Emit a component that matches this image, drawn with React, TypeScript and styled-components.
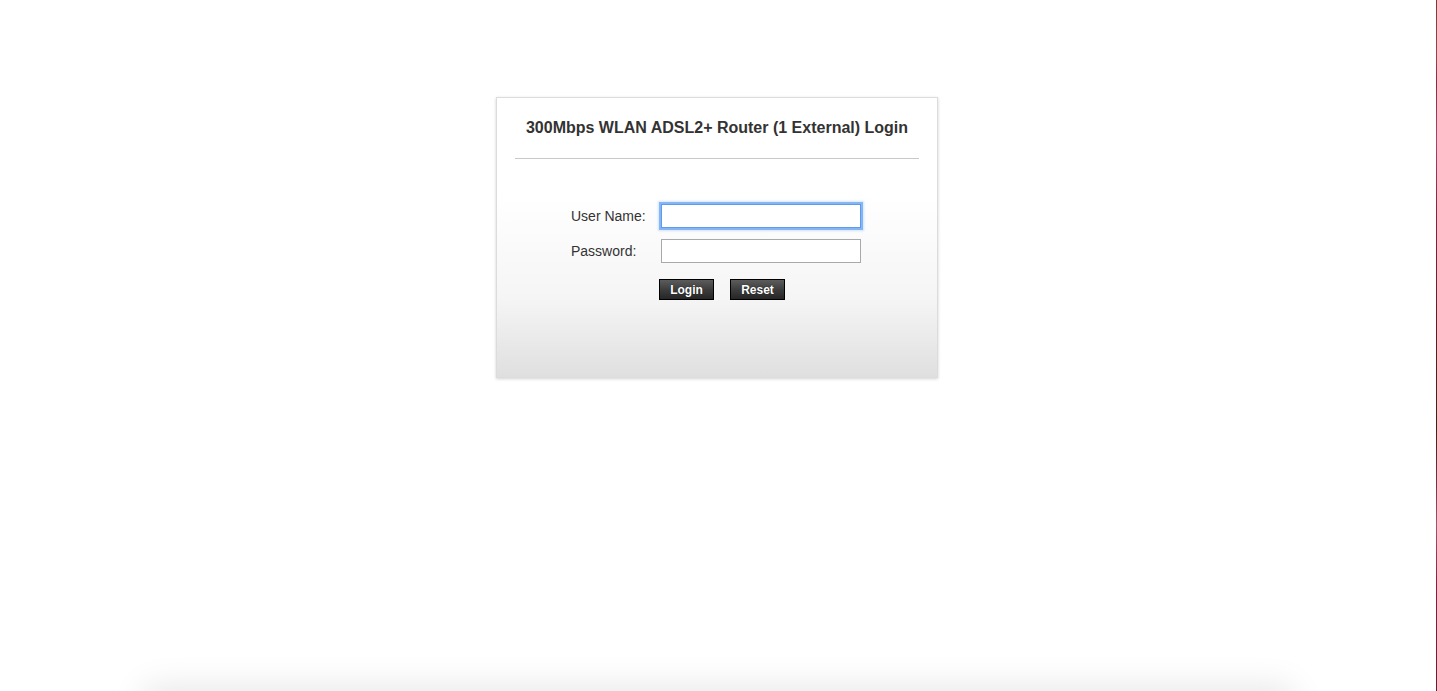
import React from 'react';
import { styled, createGlobalStyle } from 'styled-components';

const GlobalStyle = createGlobalStyle`
  html, body {
    margin: 0;
    padding: 0;
    background: #fff;
    font-family: "Liberation Sans", Arial, sans-serif;
  }
`;

const App: React.FC = () => {
  return (
    <>
      <GlobalStyle />
      <Screen>
        <Page>
          <Content>
            <LoginBox>
              <Title>300Mbps WLAN ADSL2+ Router (1 External) Login</Title>
              <Divider />
              <Form onSubmit={e => e.preventDefault()}>
                <Label htmlFor="username">User Name:</Label>
                <Field id="username" type="text" $focused />
                <Label htmlFor="password">Password:</Label>
                <Field id="password" type="password" />
                <Buttons>
                  <Button type="submit">Login</Button>
                  <Button type="reset">Reset</Button>
                </Buttons>
              </Form>
            </LoginBox>
          </Content>
          <Footer />
        </Page>
        <EdgeStrip />
      </Screen>
    </>
  );
};

export default App;

const Screen = styled.div`
  display: flex;
  flex-direction: row;
  width: 100%;
  height: 100vh;
  overflow: hidden;
`;

const Page = styled.div`
  flex: 1;
  display: flex;
  flex-direction: column;
  height: 100%;
  overflow: hidden;
`;

const Content = styled.div`
  flex: 1;
  display: flex;
  flex-direction: column;
  align-items: center;
  padding-top: 97px;
  padding-right: 2px;
`;

const LoginBox = styled.div`
  box-sizing: border-box;
  width: 442px;
  height: 281px;
  padding: 0 18px;
  border: 1px solid #dcdcdc;
  box-shadow: 0 1px 3px rgba(0, 0, 0, 0.18);
  background: linear-gradient(#ffffff 0%, #ffffff 35%, #f5f5f5 72%, #dfdfdf 100%);
`;

const Title = styled.h1`
  margin: 20px 0 0;
  height: 20px;
  line-height: 20px;
  font-size: 16px;
  font-weight: bold;
  color: #333;
  text-align: center;
`;

const Divider = styled.div`
  height: 1px;
  margin-top: 20px;
  background: #c8c8c8;
`;

const Form = styled.form`
  display: grid;
  grid-template-columns: 90px 200px;
  grid-auto-rows: 24px;
  row-gap: 11px;
  justify-content: center;
  align-items: center;
  margin-top: 45px;
  padding-right: 2px;
`;

const Label = styled.label`
  font-size: 14px;
  color: #333;
`;

const Field = styled.input<{ $focused?: boolean }>`
  box-sizing: border-box;
  width: 200px;
  height: 24px;
  margin: 0;
  padding: 2px 4px;
  font-size: 13px;
  font-family: "Liberation Sans", Arial, sans-serif;
  background: #fff;
  outline: none;
  border: 1px solid ${p => (p.$focused ? '#5d9cec' : '#a9a9a9')};
  box-shadow: ${p => (p.$focused ? '0 0 0 2px rgba(110, 165, 240, 0.75), 0 0 2px 3px rgba(130, 180, 245, 0.35)' : 'none')};
`;

const Buttons = styled.div`
  grid-column: 2;
  display: flex;
  flex-direction: row;
  gap: 16px;
  margin-left: -2px;
  margin-top: 5px;
  align-self: start;
`;

const Button = styled.button`
  box-sizing: border-box;
  width: 55px;
  height: 21px;
  padding: 0;
  border: 1px solid #000;
  border-radius: 0;
  background: linear-gradient(#5c5c5c 0%, #3a3a3a 55%, #262626 100%);
  color: #fff;
  font-family: "Liberation Sans", Arial, sans-serif;
  font-size: 12px;
  font-weight: bold;
  text-shadow: 0 0 1px rgba(0, 0, 0, 0.8);
  cursor: pointer;
`;

const Footer = styled.div`
  flex-shrink: 0;
  align-self: center;
  width: 1140px;
  height: 40px;
  margin-bottom: -40px;
  box-shadow: 0 0 34px 4px rgba(0, 0, 0, 0.1);
`;

const EdgeStrip = styled.div`
  width: 1px;
  height: 100%;
  flex-shrink: 0;
  background: linear-gradient(
    #7a3a30 0%,
    #a04048 8%,
    #8a2a3c 12%,
    #b04070 20%,
    #902040 30%,
    #6a1a20 45%,
    #3a2410 62%,
    #7a3040 70%,
    #a85070 76%,
    #901838 85%,
    #701830 100%
  );
`;
